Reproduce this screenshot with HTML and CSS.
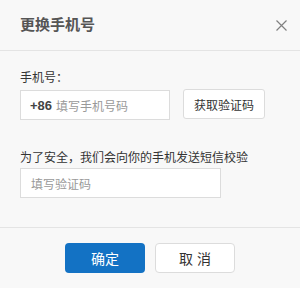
FILE: index.html
```html
<!DOCTYPE html>
<html lang="zh-CN">
<head>
    <meta charset="UTF-8">
    <meta name="viewport" content="width=device-width, initial-scale=1.0">
    <title>更换手机号</title>
    <link rel="stylesheet" href="styles.css">
</head>
<body>
    <div class="dialog">
        <div class="header">
            <span class="title">更换手机号</span>
            <span class="close">
                <svg width="11" height="11" viewBox="0 0 11 11"><path d="M0.5 0.5 L10.5 10.5 M10.5 0.5 L0.5 10.5" stroke="#808080" stroke-width="1.2" fill="none"/></svg>
            </span>
        </div>
        <div class="body">
            <div class="label">手机号：</div>
            <div class="phoneRow">
                <div class="phoneInput">
                    <span class="prefix">+86</span>
                    <span class="placeholder">填写手机号码</span>
                </div>
                <div class="codeButton">获取验证码</div>
            </div>
            <div class="label second">为了安全，我们会向你的手机发送短信校验</div>
            <div class="codeInput">
                <span class="placeholder">填写验证码</span>
            </div>
        </div>
        <div class="footer">
            <div class="okButton">确定</div>
            <div class="cancelButton">取 消</div>
        </div>
    </div>
</body>
</html>
```

FILE: styles.css
```css
html, body {
    margin: 0;
    padding: 0;
    background-color: #f8f8f8;
}

.dialog {
    width: 300px;
    height: 288px;
    font-family: "Liberation Sans", "Noto Sans CJK SC", sans-serif;
    color: #333;
}

.header {
    height: 50px;
    border-bottom: 1px solid #e4e4e4;
    display: flex;
    align-items: center;
    justify-content: space-between;
    padding: 0 13px 0 20px;
}

.title {
    font-size: 15px;
    font-weight: bold;
    color: #555;
    line-height: 20px;
}

.close {
    display: flex;
    width: 11px;
    height: 11px;
}

.body {
    padding: 19px 20px 0 20px;
    height: 157px;
    border-bottom: 1px solid #e4e4e4;
}

.label {
    font-size: 12px;
    line-height: 16px;
    color: #333;
}

.label.second {
    margin-top: 30px;
}

.phoneRow {
    display: flex;
    align-items: center;
    margin-top: 4px;
}

.phoneInput {
    width: 139px;
    height: 28px;
    border: 1px solid #dcdcdc;
    background-color: #fff;
    display: flex;
    align-items: center;
    padding-left: 9px;
    margin-right: 13px;
}

.prefix {
    font-size: 13px;
    font-weight: bold;
    color: #444;
    margin-right: 4px;
}

.placeholder {
    font-size: 12px;
    color: #999;
}

.codeButton {
    width: 80px;
    height: 28px;
    border: 1px solid #dcdcdc;
    border-radius: 3px;
    background-color: #fff;
    display: flex;
    align-items: center;
    justify-content: center;
    font-size: 12px;
    color: #333;
    margin-top: -2px;
}

.codeInput {
    width: 189px;
    height: 28px;
    margin-top: 2px;
    border: 1px solid #dcdcdc;
    background-color: #fff;
    display: flex;
    align-items: center;
    padding-left: 10px;
}

.footer {
    display: flex;
    justify-content: center;
    padding-top: 15px;
}

.okButton {
    width: 80px;
    height: 30px;
    border-radius: 4px;
    background-color: #1372c4;
    color: #fff;
    font-size: 14px;
    display: flex;
    align-items: center;
    justify-content: center;
    margin-right: 10px;
}

.cancelButton {
    width: 78px;
    height: 28px;
    border: 1px solid #dcdcdc;
    border-radius: 4px;
    background-color: #fff;
    color: #333;
    font-size: 14px;
    display: flex;
    align-items: center;
    justify-content: center;
}
```
